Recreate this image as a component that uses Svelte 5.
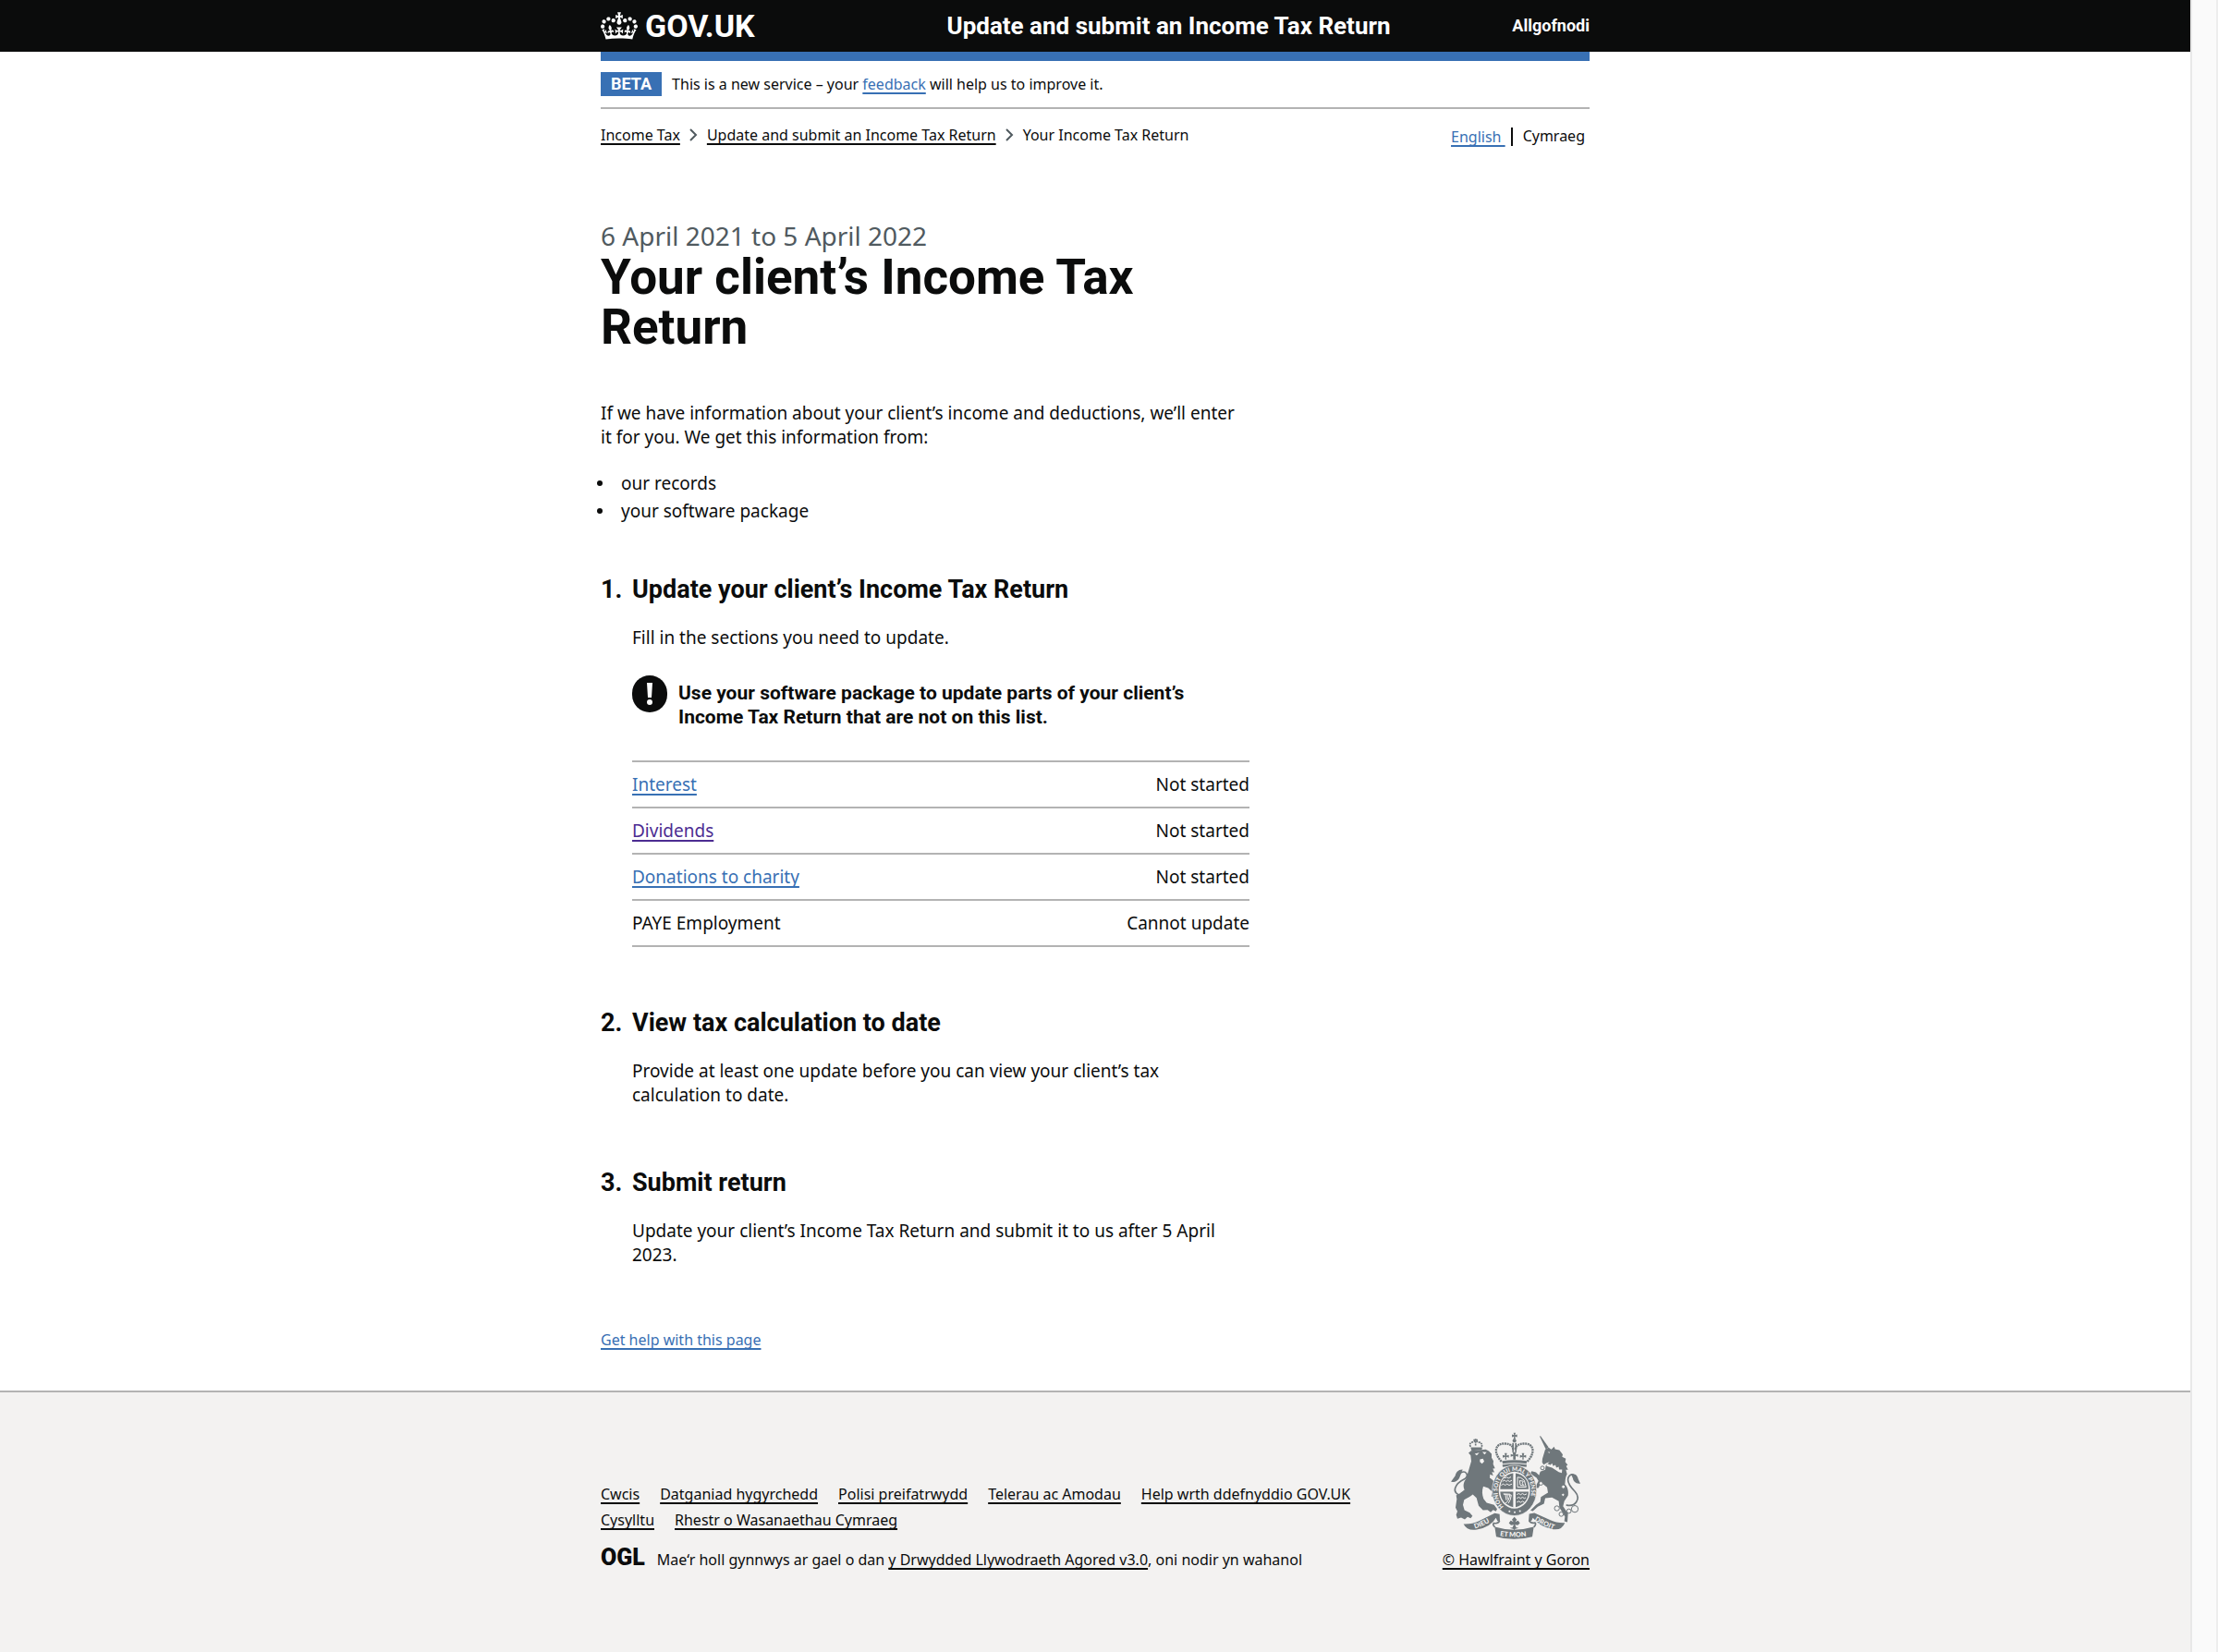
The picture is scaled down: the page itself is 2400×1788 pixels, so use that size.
<script>
  const breadcrumbs = ['Income Tax', 'Update and submit an Income Tax Return'];

  const sources = ['our records', 'your software package'];

  const tasks = [
    { name: 'Interest', status: 'Not started', linked: true, visited: false },
    { name: 'Dividends', status: 'Not started', linked: true, visited: true },
    { name: 'Donations to charity', status: 'Not started', linked: true, visited: false },
    { name: 'PAYE Employment', status: 'Cannot update', linked: false, visited: false }
  ];

  const footerLinks = [
    'Cwcis',
    'Datganiad hygyrchedd',
    'Polisi preifatrwydd',
    'Telerau ac Amodau',
    'Help wrth ddefnyddio GOV.UK',
    'Cysylltu',
    'Rhestr o Wasanaethau Cymraeg'
  ];
</script>

<div class="window">
  <div class="page">
    <header class="header">
      <div class="container header-row">
        <a class="logo" href="#home">
          <svg class="crown" viewBox="0 0 132 97" aria-hidden="true">
            <path d="M25 30.2c3.5 1.5 7.7-.2 9.1-3.7 1.5-3.6-.2-7.8-3.9-9.2-3.6-1.4-7.6.3-9.1 3.9-1.4 3.5.3 7.5 3.9 9zM9 39.5c3.6 1.5 7.8-.2 9.2-3.7 1.5-3.6-.2-7.8-3.9-9.1-3.6-1.5-7.6.2-9.1 3.8-1.4 3.5.3 7.5 3.8 9zM4.4 57.2c3.5 1.5 7.7-.2 9.1-3.8 1.5-3.6-.2-7.7-3.9-9.1-3.5-1.5-7.6.3-9.1 3.8-1.4 3.5.3 7.6 3.9 9.1zm38.3-21.4c3.5 1.5 7.7-.2 9.1-3.8 1.5-3.6-.2-7.7-3.9-9.1-3.6-1.5-7.6.3-9.1 3.8-1.3 3.6.4 7.7 3.9 9.1zm64.4-5.6c-3.6 1.5-7.8-.2-9.1-3.7-1.5-3.6.2-7.8 3.8-9.2 3.6-1.4 7.7.3 9.2 3.9 1.3 3.5-.4 7.5-3.9 9zm15.9 9.3c-3.6 1.5-7.7-.2-9.1-3.7-1.5-3.6.2-7.8 3.7-9.1 3.6-1.5 7.7.2 9.2 3.8 1.5 3.5-.3 7.5-3.8 9zm4.7 17.7c-3.6 1.5-7.8-.2-9.2-3.8-1.5-3.6.2-7.7 3.9-9.1 3.6-1.5 7.7.3 9.2 3.8 1.3 3.5-.4 7.6-3.9 9.1zM89.3 35.8c-3.6 1.5-7.8-.2-9.2-3.8-1.4-3.6.2-7.7 3.9-9.1 3.6-1.5 7.7.3 9.2 3.8 1.4 3.6-.3 7.7-3.9 9.1zM69.7 17.7l8.9 4.7V9.3l-8.9 2.8c-.2-.3-.5-.6-.9-.9L72.4 0H59.6l3.5 11.2c-.3.3-.6.5-.9.9l-8.8-2.8v13.1l8.8-4.7c.3.3.6.7.9.9l-5 15.4v.1c-.2.8-.4 1.6-.4 2.4 0 4.1 3.1 7.5 7 8.1h.2c.3 0 .7.1 1 .1.4 0 .7 0 1-.1h.2c4-.6 7.1-4.1 7.1-8.1 0-.8-.1-1.7-.4-2.4V34l-5.1-15.4c.4-.2.7-.6 1-.9zM66 92.8c16.9 0 32.8 1.1 47.1 3.2 4-16.9 8.9-26.7 14-33.5l-9.6-3.4c1 4.9 1.1 7.2 0 10.2-1.5-1.4-3-4.3-4.2-8.7L108.6 76c2.8-2 5-3.2 7.5-3.3-4.4 9.4-10 11.9-13.6 11.2-4.3-.8-6.3-4.6-5.6-7.9 1-4.7 5.7-5.9 8-.5 4.3-8.7-3-11.4-7.6-8.8 7.1-7.2 7.9-13.5 2.1-21.1-8 6.1-8.1 12.3-4.5 20.8-4.7-5.4-12.1-2.5-9.5 6.2 3.4-5.2 7.9-2 7.2 3.1-.6 4.3-6.4 7.8-13.5 7.2-10.3-.9-10.9-8-11.2-13.8 2.5-.5 7.1 1.8 11 7.3L80.2 60c-4.1 4.4-8 5.3-12.3 5.4 1.4-4.4 8-11.6 8-11.6H55.5s6.4 7.2 7.9 11.6c-4.2-.1-8-1-12.3-5.4l1.4 16.4c3.9-5.5 8.5-7.7 10.9-7.3-.3 5.8-.9 12.8-11.1 13.8-7.2.6-12.9-2.9-13.5-7.2-.7-5 3.8-8.3 7.1-3.1 2.7-8.7-4.6-11.6-9.4-6.2 3.7-8.5 3.6-14.7-4.6-20.8-5.8 7.6-5 13.9 2.2 21.1-4.7-2.6-11.9.1-7.7 8.8 2.3-5.5 7.1-4.2 8.1.5.7 3.3-1.3 7.1-5.7 7.9-3.5.7-9-1.8-13.5-11.2 2.5.1 4.7 1.3 7.5 3.3l-4.7-15.4c-1.2 4.4-2.7 7.2-4.3 8.7-1.1-3-.9-5.3 0-10.2l-9.5 3.4c5 6.9 9.9 16.7 14 33.5 14.8-2.1 30.8-3.2 47.7-3.2z" />
          </svg>
          <span>GOV.UK</span>
        </a>
        <a class="service" href="#service">Update and submit an Income Tax Return</a>
        <a class="sign-out" href="#sign-out">Allgofnodi</a>
      </div>
    </header>

    <div class="container intro">
      <div class="phase">
        <strong class="tag">BETA</strong>
        <span>This is a new service – your <a class="link" href="#feedback">feedback</a> will help us to improve it.</span>
      </div>
      <div class="nav-row">
        <nav aria-label="Breadcrumb">
          <ol class="crumbs">
            {#each breadcrumbs as crumb}
              <li>
                <a class="plain-link" href="#crumb">{crumb}</a>
                <svg class="chevron" viewBox="0 0 9 14" aria-hidden="true"><path d="M1 1l6 6-6 6" /></svg>
              </li>
            {/each}
            <li>Your Income Tax Return</li>
          </ol>
        </nav>
        <nav class="languages" aria-label="Language">
          <a class="link" href="#en">English&nbsp;</a>
          <span class="current">Cymraeg</span>
        </nav>
      </div>
    </div>

    <main class="container main">
      <div class="column">
        <span class="caption">6 April 2021 to 5 April 2022</span>
        <h1>Your client’s Income Tax Return</h1>
        <p>If we have information about your client’s income and deductions, we’ll enter it for you. We get this information from:</p>
        <ul class="sources">
          {#each sources as source}
            <li>{source}</li>
          {/each}
        </ul>

        <ol class="steps">
          <li class="step">
            <h2><span class="number">1.</span>Update your client’s Income Tax Return</h2>
            <p>Fill in the sections you need to update.</p>
            <div class="warning">
              <svg viewBox="0 0 38 40" aria-hidden="true">
                <rect width="38" height="40" rx="19" fill="#0b0c0c" />
                <path d="M16 8h6l-1 16h-4z" fill="#fff" />
                <circle cx="19" cy="29" r="3" fill="#fff" />
              </svg>
              <strong>Use your software package to update parts of your client’s Income Tax Return that are not on this list.</strong>
            </div>
            <table>
              <tbody>
                {#each tasks as task}
                  <tr>
                    <th scope="row">
                      {#if task.linked}
                        <a class="link" class:visited={task.visited} href="#task">{task.name}</a>
                      {:else}
                        {task.name}
                      {/if}
                    </th>
                    <td>{task.status}</td>
                  </tr>
                {/each}
              </tbody>
            </table>
          </li>
          <li class="step">
            <h2><span class="number">2.</span>View tax calculation to date</h2>
            <p>Provide at least one update before you can view your client’s tax calculation to date.</p>
          </li>
          <li class="step">
            <h2><span class="number">3.</span>Submit return</h2>
            <p>Update your client’s Income Tax Return and submit it to us after 5 April 2023.</p>
          </li>
        </ol>
      </div>
      <a class="link help" href="#help">Get help with this page</a>
    </main>

    <footer class="footer">
      <div class="container footer-row">
        <div class="footer-main">
          <ul class="footer-links">
            {#each footerLinks as label}
              <li><a class="plain-link" href="#footer">{label}</a></li>
            {/each}
          </ul>
          <div class="licence">
            <strong class="ogl">OGL</strong>
            <span>Mae‘r holl gynnwys ar gael o dan <a class="plain-link" href="#licence">y Drwydded Llywodraeth Agored v3.0</a>, oni nodir yn wahanol</span>
          </div>
        </div>
        <div class="copyright">
          <svg class="arms" viewBox="60 56 420 347" aria-hidden="true">
            <defs>
              <path id="garter" d="M231 298a55 66 0 1 1 75 -5" />
              <path id="motto-left" d="M138 369q30-9 58-28" />
              <path id="motto-centre" d="M219 392q48 8 98 0" />
              <path id="motto-right" d="M331 342q30 18 66 32" />
            </defs>
            <g class="solid">
              <!-- royal crown -->
              <path d="M263 58h7l-2 7 7-2v9l-7-2 2 8h-7l2-8-7 2v-9l7 2z" />
              <circle cx="266" cy="83" r="6" />
              <path d="M226 149q40-6 81 0l-2 9q-39-6-77 0zM227 161q39-6 79 0l-1 8q-39-7-77 0z" />
              <path d="M236 145v-9l-8 3v-9l8 2-2-8h8l-2 8 8-2v9l-8-3v9zM262 145v-12l-8 3v-9l8 2-2-8h12l-2 8 8-2v9l-8-3v12zM292 145v-9l-8 3v-9l8 2-2-8h8l-2 8 8-2v9l-8-3v9z" />
              <path d="M259 91h5v30h-5zM268 91h5v30h-5z" />
              <!-- lion -->
              <path d="M121 120l4-4 48-4 10 5 9 9 0 13 6 10-1 11 6 13-7 1 5 12-8-1 4 12-10-4-1 11c11 6 17 16 20 27l8 10-4 15-12 12-7-5 4-13-14-13-16-5c-5 15-4 26 1 40l10 13 24 7 10 13-4 8-9-5-8 8-10-8-15 1-14-14-7-26-12-11c-9 8-20 12-28 17l-4 17 5 17 17 8 9 11-6 7-10-4-9 8-12-6-12 4-4-13 4-11-6-12 4-28-2-12 10-5 17-13c-6-13-3-25 5-36l9-29 8-28-2-19-7-8z" />
              <path d="M124 105h38l-2 8-33 3z" />
              <!-- unicorn -->
              <path d="M348 69l3-1 26 37-9 6z" />
              <path d="M366 112l11-6 9 6 9-9 3 8 14 3 11 14-2 8 12 6-2 10 8 10-5 4 6 12-7 0 4 14c-7 13-5 23-7 33 10 10 12 25 10 37l-12 18-4 16 16 24-2 28-10-3 2-15-18-30-2-20-22-12-22 2-4 18-20 10-16 14-8-2 18-18 14-10 2-16 23-14-3-17-20-17-7 18-9 2 2-12 6-12-6-10-12-8-8-6 4-8 14 4 10 10 4-12 16-6 2-14 12-12-10 4-9 5-5-7 1-12z" />
              <!-- ribbon -->
              <path d="M101 354q29 1 48-9l53-26 16 3 1 23-8-1-5-10q-17 31-62 38-32 5-43-18z" />
              <path d="M430 350q-27 1-47-9l-52-23-17 3-2 24 9-1 5-10q23 30 66 37 28 4 38-21z" />
              <path d="M202 363q62 19 127 0l-5 32q-61 16-117 0z" />
              <path d="M266 331l8 9-5 7 9-4 6 8-7 7-9-2 4 9 8 2-11 3-3 4-4-4-11-3 9-2 4-9-9 2-7-7 6-8 9 4-5-7z" />
            </g>
            <!-- crown arches -->
            <g class="beads">
              <path d="M224 151c-27-28-22-60 12-58 15 1 25 5 26 19" />
              <path d="M308 151c27-28 22-60-12-58-15 1-25 5-26 19" />
            </g>
            <g class="beads small">
              <path d="M124 103q-7-11 6-15l10-4 10 4q13 3 10 15M140 77v24M133 81h14" />
            </g>
            <!-- tails and ribbon folds -->
            <g class="line">
              <path d="M100 264c-48-10-23-43 4-56 17-12 4-29-11-21-12 6-8 19-22 22" />
              <path d="M434 292c30 8 49-21 29-43-18-18-31-38-18-52 13-10 17 1 22 14" />
              <path d="M218 344q-5 10-19 7-5 5 4 13" />
              <path d="M314 343q5 10 19 7 5 5-4 14" />
            </g>
            <path class="solid" d="M98 177c-13-1-22 9-24 20l-14 20c13 2 25-4 29-17zM450 192c15-3 22 8 23 16l7 15c-12 0-22-5-24-17z" />
            <!-- faces, mane and collar -->
            <g class="cut">
              <path d="M137 126l15-4-8 9zM162 120l14 1-7 7zM154 144l10-2 4 9-7 7-7-6zM374 120l8 1-3 3z" />
              <path d="M372 158l11 4 5-5 4 9 7-4 3 9 8-3 1 9 10 0-1 11-10-3-22-14-18-5z" />
            </g>
            <!-- garter and shield -->
            <ellipse class="garter" cx="266" cy="245" rx="72" ry="82" />
            <ellipse class="cut" cx="266" cy="244" rx="51" ry="60" />
            <g class="solid">
              <path d="M262 189v52h-42q0-44 42-52zM270 189v52h42q0-44-42-52zM262 249v50q-40-10-42-50zM270 249v50q40-10 42-50z" />
            </g>
            <g class="quarter">
              <path d="M227 216l7-5 5 5 6-4 5 4 8-4M223 228l7-4 6 4 6-4 7 4 9-4M233 205l8-3 6 3 8-4" />
              <path d="M276 202q10-2 22 10l6 22h-28zM283 213l12 2-4 8 7 6-13-1z" />
              <path d="M230 256l22 1q-4 24-15 29M237 260l3 17M243 260l1 14M232 258l24 2q-2 18-10 27" />
              <path d="M274 258l7-3 5 4 6-4 7 4 7-3M274 270l7-3 5 4 6-4 7 4 4-3M274 283l7-3 5 4 6-4 6 3" />
            </g>
            <g class="cut">
              <circle cx="250" cy="313" r="3" />
              <circle cx="267" cy="316" r="3" />
              <circle cx="284" cy="312" r="3" />
            </g>
            <g class="motto">
              <text class="garter-text"><textPath href="#garter">HONI SOIT QUI MAL Y PENSE</textPath></text>
              <text><textPath href="#motto-left">DIEU</textPath></text>
              <text><textPath href="#motto-centre">ET MON</textPath></text>
              <text><textPath href="#motto-right">DROIT</textPath></text>
            </g>
            <!-- chain -->
            <g class="chain">
              <circle cx="357" cy="172" r="6" />
              <circle cx="352" cy="222" r="6" />
              <circle cx="425" cy="233" r="6" />
              <circle cx="424" cy="259" r="5" />
              <circle cx="404" cy="303" r="8" />
              <circle cx="418" cy="322" r="7" />
              <circle cx="443" cy="312" r="7" />
              <circle cx="462" cy="305" r="11" />
            </g>
          </svg>
          <a class="plain-link" href="#copyright">© Hawlfraint y Goron</a>
        </div>
      </div>
    </footer>
  </div>
  <div class="scroll-track" aria-hidden="true"></div>
</div>

<style>
  :global(body) {
    margin: 0;
    background: #fff;
  }

  .window {
    --text: 'Noto Sans', 'Liberation Sans', sans-serif;
    --display: Roboto, 'Liberation Sans', sans-serif;
    --blue: #3870b4;
    --black: #0b0c0c;
    --rule: #b3b3b3;
    display: flex;
    min-height: 100vh;
    color: var(--black);
    font: 19px/26px var(--text);
  }

  .page {
    display: flex;
    flex: 1;
    flex-direction: column;
    min-width: 0;
  }

  .scroll-track {
    box-sizing: border-box;
    width: 30px;
    background: #fafafa;
    border-right: 2px solid #ededed;
    border-left: 2px solid #e8e8e8;
  }

  .container {
    box-sizing: border-box;
    width: 100%;
    max-width: 1070px;
    margin: 0 auto;
  }

  h1,
  h2,
  p,
  ul,
  ol {
    margin: 0;
    padding: 0;
  }

  ul,
  ol {
    list-style: none;
  }

  .link,
  .plain-link {
    color: var(--blue);
    text-decoration: underline;
    text-decoration-thickness: 2px;
    text-underline-offset: 3px;
    text-decoration-skip-ink: none;
  }

  .plain-link {
    color: var(--black);
  }

  .visited {
    color: #4c2c92;
  }

  .header {
    background: var(--black);
  }

  .header-row {
    display: flex;
    align-items: center;
    height: 56px;
  }

  .header a {
    color: #fff;
    font-family: var(--display);
    font-weight: 700;
    text-decoration: none;
  }

  .logo {
    display: flex;
    align-items: center;
    gap: 8px;
    width: 35%;
    font-size: 34px;
  }

  .crown {
    width: 40px;
    height: 30px;
    fill: #fff;
  }

  .service {
    flex: 1;
    font-size: 26px;
  }

  .header .sign-out {
    font-size: 18px;
  }

  .intro {
    border-top: 10px solid var(--blue);
    font-size: 16px;
    line-height: 20px;
  }

  .phase {
    display: flex;
    align-items: center;
    gap: 11px;
    padding: 12px 0;
    border-bottom: 2px solid var(--rule);
  }

  .tag {
    padding: 0 11px;
    color: #fff;
    background: var(--blue);
    font: 700 18px/26px var(--display);
  }

  .nav-row {
    display: flex;
    align-items: flex-start;
    justify-content: space-between;
    padding-top: 18px;
  }

  .crumbs,
  .crumbs li {
    display: flex;
    align-items: center;
    gap: 10px;
  }

  .chevron {
    width: 9px;
    height: 14px;
    fill: none;
    stroke: #505a5f;
    stroke-width: 2;
  }

  .languages {
    display: flex;
    gap: 6px;
    padding: 2px 5px 0 0;
  }

  .current {
    padding-left: 11px;
    border-left: 2px solid var(--black);
    line-height: 18px;
  }

  .main {
    flex: 1;
    padding: 81px 0 42px;
  }

  .column {
    max-width: 702px;
  }

  .caption {
    display: block;
    margin-bottom: 2px;
    color: #505a5f;
    font-size: 28px;
    line-height: 32px;
  }

  h1 {
    margin-bottom: 53px;
    font: 700 53px/54px var(--display);
  }

  .sources {
    display: grid;
    gap: 4px;
    margin: 24px 0 56px;
  }

  .sources li {
    display: flex;
    align-items: center;
    gap: 20px;
    margin-left: -4px;
  }

  .sources li::before {
    width: 6px;
    height: 6px;
    background: var(--black);
    border-radius: 50%;
    content: '';
  }

  .steps {
    display: grid;
    gap: 66px;
  }

  .step {
    padding-left: 34px;
  }

  h2 {
    margin: 0 0 23px -34px;
    font: 700 27px/32px var(--display);
  }

  .number {
    display: inline-block;
    width: 34px;
  }

  .warning {
    display: flex;
    gap: 12px;
    margin: 28px 0 34px;
  }

  .warning svg {
    flex: none;
    width: 38px;
    height: 40px;
  }

  .warning strong {
    padding-top: 6px;
    font: 700 21px/26px var(--display);
  }

  table {
    width: 100%;
    border-top: 2px solid var(--rule);
    border-spacing: 0;
  }

  th,
  td {
    padding: 11px 0;
    border-bottom: 2px solid var(--rule);
    font-weight: 400;
    text-align: left;
  }

  td {
    text-align: right;
  }

  .help {
    display: inline-block;
    margin-top: 69px;
    font-size: 16px;
    line-height: 20px;
  }

  .footer {
    padding: 43px 0 86px;
    background: #f3f2f1;
    border-top: 2px solid var(--rule);
    font-size: 16px;
    line-height: 28px;
  }

  .footer-row {
    display: flex;
    align-items: flex-end;
    gap: 40px;
  }

  .footer-main {
    flex: 1;
  }

  .footer-links {
    display: flex;
    flex-wrap: wrap;
    column-gap: 22px;
    margin-bottom: 15px;
  }

  .licence {
    display: flex;
    gap: 13px;
  }

  .ogl {
    font: 900 25px/24px var(--display);
  }

  .copyright {
    display: flex;
    flex-direction: column;
    align-items: center;
    gap: 8px;
  }

  .arms {
    width: 140px;
    height: 116px;
  }

  .solid {
    fill: #6f777b;
  }

  .line,
  .beads,
  .chain {
    fill: none;
    stroke: #6f777b;
    stroke-width: 5;
  }

  .beads {
    stroke-width: 7;
    stroke-dasharray: 6 2;
  }

  .beads.small {
    stroke-width: 5;
  }

  .chain {
    fill: #f3f2f1;
    stroke-width: 3;
  }

  .cut {
    fill: #f3f2f1;
  }

  .garter {
    fill: #6f777b;
    stroke: #f3f2f1;
    stroke-width: 2;
  }

  .quarter {
    fill: none;
    stroke: #f3f2f1;
    stroke-width: 3;
  }

  .motto {
    fill: #f3f2f1;
    font: 900 22px Lato, sans-serif;
  }

  .garter-text {
    font-size: 19px;
  }
</style>
